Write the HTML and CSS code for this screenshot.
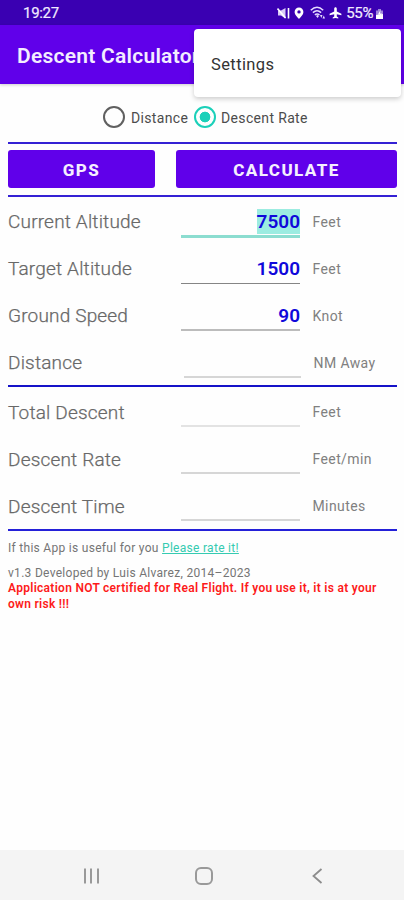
FILE: index.html
```html
<!DOCTYPE html>
<html lang="en">
<head>
<meta charset="utf-8">
<title>Descent Calculator</title>
<link rel="stylesheet" href="styles.css">
</head>
<body>
<div class="status">
  <span class="clock">19:27</span>
  <div class="status-icons">
    <svg class="mute" width="13" height="12" viewBox="0 0 13 12"><path d="M1 3.500h3L8.500 1v10.500L4 8.500H1z" fill="#d9ccf5"/><path d="M.5 1.500l8 9.500M11.500 1v10.500" stroke="#fff" stroke-width="1.600" fill="none"/></svg>
    <svg class="pin" width="10" height="12" viewBox="0 0 10 12"><path fill="#fff" fill-rule="evenodd" d="M5 .5a4.400 4.400 0 0 0-4.400 4.400C.6 8 5 11.800 5 11.800S9.400 8 9.400 4.900A4.400 4.400 0 0 0 5 .5zM5 3.200a1.700 1.700 0 1 1 0 3.400 1.700 1.700 0 0 1 0-3.400z"/></svg>
    <svg class="wifi" width="16" height="13" viewBox="0 0 16 13"><g fill="none" stroke="#e6dcff" stroke-width="1.500"><path d="M.8 4.300Q7 -1.700 13.200 4.300M2.900 6.600Q7 2.800 11.100 6.600M4.900 8.900Q7 7 9.500 8.900"/></g><path d="M6 10l1.500-1L9 10l-1.500 2zM10 9h2.500l-1.200 3zM12.500 12.500h2.500l-1.200-3z" fill="#e6dcff"/></svg>
    <svg class="plane" width="13" height="12" viewBox="0 0 13 12"><path fill="#fff" d="M6.500.3c.8 0 1.300.7 1.300 1.400v2.700l4.600 2.400v1.500L7.800 7.200v2.200l1.500 1.200v1l-2.800-.7-2.800.7v-1l1.500-1.200V7.200L.6 8.300V6.800l4.600-2.400V1.700c0-.7.500-1.400 1.300-1.400z"/></svg>
    <span class="percent">55%</span>
    <svg class="battery" width="9" height="12" viewBox="0 0 9 12"><path d="M3 1h3v1.500h2V11H1V2.500h2z" fill="#9e84da"/><path d="M1 7l7-1v5H1z" fill="#fff"/><path d="M5.500 2L3 6.500h2L4 9.500 7 5.500H5z" fill="#fff"/></svg>
  </div>
</div>
<header class="appbar"><h1>Descent Calculator</h1></header>
<div class="menu"><span>Settings</span></div>

<main>
  <div class="modes">
    <i class="radio"></i><span class="opt-a">Distance</span>
    <i class="radio on"></i><span class="opt-b">Descent Rate</span>
  </div>
  <div class="buttons">
    <button class="gps">GPS</button>
    <button class="calc">CALCULATE</button>
  </div>
  <section class="inputs">
    <div class="row"><label>Current Altitude</label><div class="field focus"><b class="selected">7500</b></div><span class="unit">Feet</span></div>
    <div class="row"><label>Target Altitude</label><div class="field dark"><b>1500</b></div><span class="unit">Feet</span></div>
    <div class="row"><label>Ground Speed</label><div class="field mid"><b>90</b></div><span class="unit">Knot</span></div>
    <div class="row"><label>Distance</label><div class="field inset"></div><span class="unit shifted">NM Away</span></div>
  </section>
  <section class="results">
    <div class="row"><label>Total Descent</label><div class="field pale"></div><span class="unit">Feet</span></div>
    <div class="row"><label>Descent Rate</label><div class="field"></div><span class="unit">Feet/min</span></div>
    <div class="row"><label>Descent Time</label><div class="field"></div><span class="unit">Minutes</span></div>
  </section>
  <p class="rate">If this App is useful for you <a>Please rate it!</a></p>
  <p class="version">v1.3 Developed by Luis Alvarez, 2014–2023</p>
  <p class="warning">Application NOT certified for Real Flight. If you use it, it is at your own risk !!!</p>
</main>

<nav>
  <svg width="20" height="20" viewBox="0 0 20 20"><path d="M4 2.500v15M10 2.500v15M17 2.500v15" stroke="#999" stroke-width="2"/></svg>
  <svg width="20" height="20" viewBox="0 0 20 20"><rect x="2" y="2" width="16" height="16" rx="5" fill="none" stroke="#999" stroke-width="2"/></svg>
  <svg width="20" height="20" viewBox="0 0 20 20"><path d="M14.500 3L6.500 10l8 7" fill="none" stroke="#8c8c8c" stroke-width="1.800"/></svg>
</nav>
</body>
</html>
```

FILE: styles.css
```css
* { box-sizing: border-box; }
body {
  margin: 0;
  width: 404px;
  height: 900px;
  display: flex;
  flex-direction: column;
  position: relative;
  overflow: hidden;
  background: #fefefe;
  color: #686868;
  font-family: Roboto, "Liberation Sans", sans-serif;
}
.status {
  height: 25px;
  flex: none;
  background: #3a00b2;
  color: #f1eaff;
  display: flex;
  align-items: center;
  justify-content: space-between;
  padding: 0 20px 0 23px;
}
.clock { font-size: 15px; letter-spacing: -0.3px; -webkit-text-stroke: 0.2px; }
.status-icons { display: flex; align-items: center; }
.pin { margin-left: 4px; }
.wifi { margin-left: 6px; }
.plane { margin-left: 3px; }
.percent { font-size: 15px; letter-spacing: -0.4px; margin-left: 4px; -webkit-text-stroke: 0.2px; }
.battery { margin-left: 2px; margin-top: 3px; }
.appbar {
  height: 59px;
  flex: none;
  background: #6000ea;
  padding-left: 17px;
  display: flex;
  align-items: center;
  box-shadow: 0 1px 3px #0003;
}
h1 {
  margin: 0;
  padding-top: 3px;
  font-size: 21px;
  font-weight: 600;
  letter-spacing: 0.25px;
  line-height: 28px;
  color: #f3edff;
  white-space: nowrap;
}
.menu {
  position: absolute;
  left: 194px;
  top: 29px;
  width: 207px;
  height: 68px;
  padding: 2px 0 0 17px;
  display: flex;
  align-items: center;
  background: #fff;
  border-radius: 4px;
  box-shadow: 0 2px 5px #0003;
  color: #333;
  font-size: 16.5px;
  letter-spacing: 0.4px;
}
main { flex: 1; padding: 0 7px 0 8px; }
.modes {
  height: 58px;
  display: flex;
  align-items: center;
  padding: 8px 0 0 95px;
  color: #4c4c4c;
  font-size: 14px;
  letter-spacing: 0.35px;
}
.radio {
  width: 22px;
  height: 22px;
  border: 2px solid #606060;
  border-radius: 50%;
  flex: none;
}
.radio.on {
  border-color: #1bd0b9;
  background: radial-gradient(circle, #1bd0b9 0 5px, transparent 5.700px);
}
.opt-a { width: 57px; margin: 0 6px 0 6px; padding-top: 1px; }
.opt-b { margin-left: 5px; padding-top: 1px; }
.buttons {
  height: 55px;
  display: flex;
  gap: 21px;
  padding: 6px 0 7px;
  border-top: 2px solid #3421d4;
  border-bottom: 2px solid #3421d4;
}
button {
  border: 0;
  border-radius: 3px;
  padding: 2px 0 0;
  background: #6000ea;
  color: #f5efff;
  font: 800 17px Roboto, sans-serif;
  letter-spacing: 1.4px;
}
.gps { width: 147px; }
.calc { width: 221px; }
.inputs { height: 190px; border-bottom: 2px solid #1512c8; padding-top: 1px; }
.results { height: 144px; border-bottom: 2px solid #2420d8; padding-top: 1px; }
.row {
  height: 47px;
  display: grid;
  grid-template-columns: 173px 119px 1fr;
  align-items: center;
}
label { font-size: 19px; font-weight: 300; letter-spacing: 0.18px; -webkit-text-stroke: 0.25px; }
.results label, .results .unit { padding-top: 1px; }
.field {
  height: 30px;
  margin-top: 1px;
  border-bottom: 2px solid #d6d6d6;
  display: flex;
  justify-content: flex-end;
  align-items: flex-start;
  color: #1008da;
  font-size: 19px;
}
.field b { font-weight: 600; line-height: 24px; margin-top: 3px; }
.field .selected { background: #9cece1; margin-top: 2px; padding-top: 1px; }
.field.focus { border-bottom: 3px solid #8cddd0; height: 31px; }
.field.dark { border-bottom: 1px solid #858585; }
.field.mid { border-bottom-color: #bcbcbc; }
.field.pale { border-bottom-color: #e3e3e3; }
.field.inset { margin-left: 3px; margin-right: -1px; }
.unit { padding-left: 12.500px; font-size: 14px; letter-spacing: 0.4px; color: #808080; }
.unit.shifted { padding-left: 13.500px; }
p { margin: 0; font-size: 12px; line-height: 16px; letter-spacing: 0.29px; color: #757575; }
.rate { padding-top: 9px; }
.rate a { color: #35cbb1; text-decoration: underline; }
.version { padding-top: 9px; }
.warning { color: #fd1a1a; font-weight: 600; line-height: 16px; margin-top: -1px; }
nav {
  height: 50px;
  flex: none;
  background: #f4f4f4;
  display: flex;
  justify-content: space-between;
  align-items: center;
  padding: 2px 77px 0 81px;
}
```
